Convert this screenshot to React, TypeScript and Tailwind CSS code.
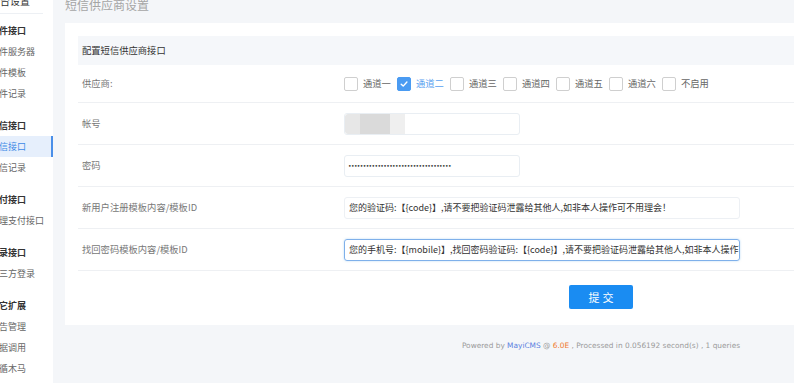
import React from "react";

const groups: { title: string; items: string[] }[] = [
  { title: "邮件接口", items: ["邮件服务器", "邮件模板", "邮件记录"] },
  { title: "短信接口", items: ["短信接口", "短信记录"] },
  { title: "支付接口", items: ["管理支付接口"] },
  { title: "登录接口", items: ["第三方登录"] },
  { title: "其它扩展", items: ["广告管理", "数据调用", "查循木马"] },
];

const channels = ["通道一", "通道二", "通道三", "通道四", "通道五", "通道六", "不启用"];

function Check() {
  return (
    <svg width="10" height="10" viewBox="0 0 10 10" fill="none">
      <polyline points="2.2,5.2 4.2,7.1 7.9,3" stroke="white" strokeWidth="1.4" strokeLinecap="round" strokeLinejoin="round" />
    </svg>
  );
}

export default function App() {
  return (
    <div className="w-[794px] h-[383px] overflow-hidden flex bg-[#f4f6f9] font-['Noto_Sans_CJK_SC','Noto_Sans',sans-serif]">
      <aside className="w-[53px] shrink-0 bg-white overflow-hidden">
        <div className="-ml-[10px] w-[63px]">
          <div className="h-[14px] mr-[10px] border-b border-[#edf0f4] flex items-start">
            <div className="-mt-[5px] text-[10px] leading-[12px] text-[#333] whitespace-nowrap">后台设置</div>
          </div>
          <div className="pt-[6px]">
            {groups.map((g, gi) => (
              <div key={gi} className={gi === 0 ? "" : "mt-[11px]"}>
                <div className="h-[21px] flex items-center text-[9px] font-bold text-[#333] whitespace-nowrap">{g.title}</div>
                {g.items.map((it, ii) => {
                  const active = gi === 1 && ii === 0;
                  return (
                    <div
                      key={ii}
                      className={
                        active
                          ? "h-[21px] flex items-center text-[9px] whitespace-nowrap bg-[#e6effc] text-[#3d8ae6] border-r-[2px] border-[#4a8fe8]"
                          : "h-[21px] flex items-center text-[9px] whitespace-nowrap text-[#666]"
                      }
                    >
                      {it}
                    </div>
                  );
                })}
              </div>
            ))}
          </div>
        </div>
      </aside>

      <main className="w-[1096px] shrink-0 pl-[12px] pr-[12px]">
        <div className="h-[23px] text-[12px] leading-[10px] text-[#a5a5a5] whitespace-nowrap">短信供应商设置</div>
        <div className="w-[1072px] h-[302px] bg-white px-[13px] pt-[13px]">
          <div className="h-[29px] bg-[#f5f7fa] px-[4px] flex items-center text-[9.3px] text-[#333]">配置短信供应商接口</div>

          <div className="h-[38px] flex items-center border-b border-[#eef0f3]">
            <div className="w-[266px] pl-[4px] text-[9.3px] text-[#777]">供应商:</div>
            <div className="flex items-center">
              {channels.map((c, i) => {
                const checked = i === 1;
                return (
                  <div key={i} className="w-[53px] flex items-center">
                    <div
                      className={
                        checked
                          ? "w-[14px] h-[14px] rounded-[2px] bg-[#4a9bf2] border border-[#4a9bf2] flex items-center justify-center"
                          : "w-[14px] h-[14px] rounded-[2px] bg-white border border-[#cfcfcf]"
                      }
                    >
                      {checked && <Check />}
                    </div>
                    <span className={checked ? "ml-[5px] text-[9.3px] text-[#5aa2f0] whitespace-nowrap" : "ml-[5px] text-[9.3px] text-[#666] whitespace-nowrap"}>{c}</span>
                  </div>
                );
              })}
            </div>
          </div>

          <div className="h-[42px] flex items-center border-b border-[#eef0f3]">
            <div className="w-[266px] pl-[4px] text-[9.3px] text-[#777]">帐号</div>
            <div className="w-[176px] h-[22px] border border-[#e9eef3] rounded-[3px] flex items-stretch overflow-hidden">
              <div className="w-[15px] bg-[#e7e7e7] rounded-l-[3px]"></div>
              <div className="w-[30px] bg-[#dadada]"></div>
              <div className="w-[15px] bg-[#efefef]"></div>
            </div>
          </div>

          <div className="h-[42px] flex items-center border-b border-[#eef0f3]">
            <div className="w-[266px] pl-[4px] text-[9.3px] text-[#777]">密码</div>
            <div className="w-[176px] h-[22px] border border-[#e9eef3] rounded-[3px] flex items-center pl-[3px]">
              <span className="font-['DejaVu_Sans',sans-serif] text-[6px] leading-[6px] tracking-[-0.6px] text-[#333] whitespace-nowrap">
                {"•".repeat(35)}
              </span>
            </div>
          </div>

          <div className="h-[42px] flex items-center border-b border-[#eef0f3]">
            <div className="w-[266px] pl-[4px] text-[9.3px] text-[#777]">新用户注册模板内容/模板ID</div>
            <div className="w-[396px] h-[22px] border border-[#edf0f4] rounded-[3px] flex items-center pl-[4px] overflow-hidden">
              <span className="text-[9px] text-[#333] whitespace-nowrap">您的验证码:【{"{code}"}】,请不要把验证码泄露给其他人,如非本人操作可不用理会！</span>
            </div>
          </div>

          <div className="h-[42px] flex items-center border-b border-[#eef0f3]">
            <div className="w-[266px] pl-[4px] text-[9.3px] text-[#777]">找回密码模板内容/模板ID</div>
            <div className="w-[396px] h-[22px] border border-[#7fb0ea] rounded-[3px] shadow-[0_0_2px_rgba(102,175,233,0.5)] flex items-center pl-[4px] overflow-hidden">
              <span className="text-[9px] text-[#333] whitespace-nowrap">您的手机号:【{"{mobile}"}】,找回密码验证码:【{"{code}"}】,请不要把验证码泄露给其他人,如非本人操作可不用理会！</span>
            </div>
          </div>

          <div className="flex justify-center pt-[14px]">
            <div className="w-[64px] h-[24px] bg-[#1a8cf2] rounded-[2px] flex items-center justify-center text-white text-[11px] tracking-[3px] pl-[3px]">提交</div>
          </div>
        </div>

        <div className="mt-[15px] text-center text-[7.4px] leading-[12px] text-[#9a9a9a] font-['DejaVu_Sans',sans-serif] whitespace-nowrap">
          Powered by <span className="text-[#5a7fe0]">MayiCMS</span> @ <span className="text-[#f07a30]">6.0E</span> , Processed in 0.056192 second(s) , 1 queries
        </div>
      </main>
    </div>
  );
}
